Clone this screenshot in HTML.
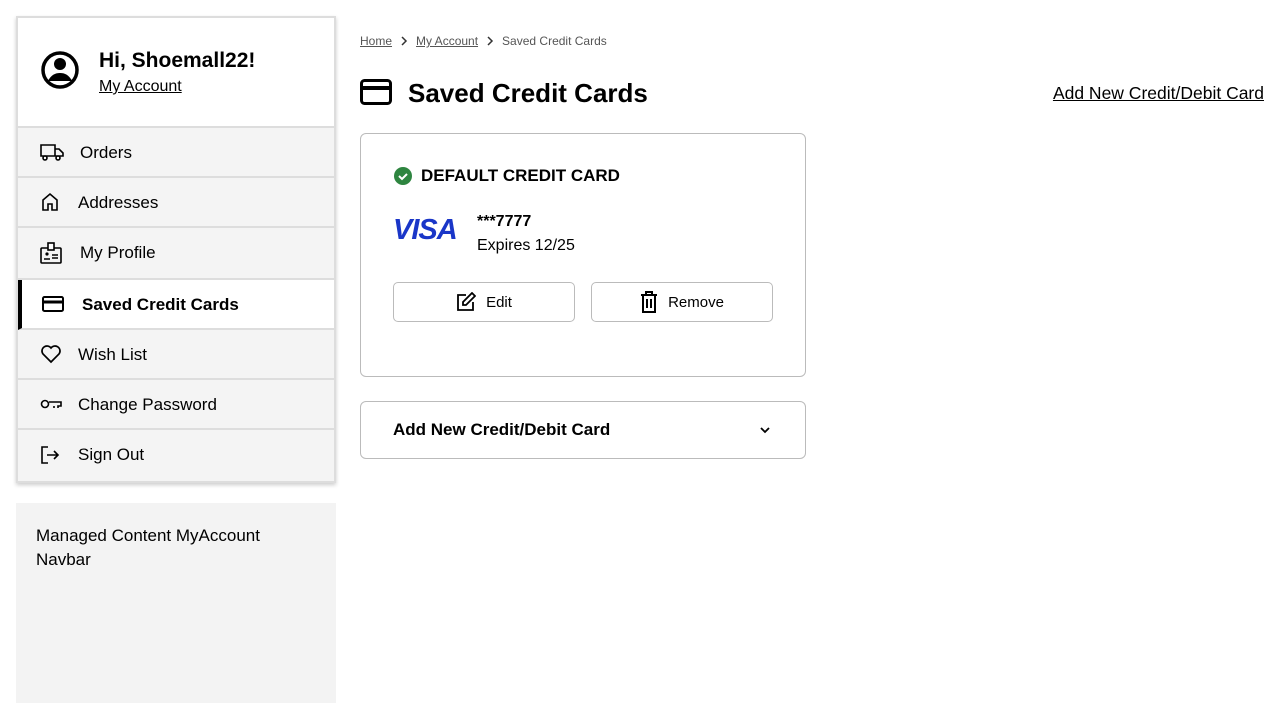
<!DOCTYPE html>
<html><head><meta charset="utf-8"><style>
*{box-sizing:border-box;margin:0;padding:0}
body{width:1280px;height:720px;background:#fff;font-family:"Liberation Sans",sans-serif;color:#000;position:relative;overflow:hidden}
.side{position:absolute;left:16px;top:16px;width:320px;height:467px;border:2px solid #ddd;box-shadow:0 2px 4px rgba(0,0,0,.2);background:#f4f4f4}
.hdr{height:110px;background:#fff;border-bottom:2px solid #ddd;position:relative}
.hdr .nm{position:absolute;left:81px;top:31px;font-size:21px;font-weight:bold}
.hdr .ma{position:absolute;left:81px;top:60px;font-size:16px;text-decoration:underline}
.hdr svg{position:absolute;left:22px;top:32px}
.it{height:50px;border-bottom:2px solid #ddd;position:relative;font-size:17px;display:flex;align-items:center}
.it svg{position:absolute;left:22px}
.it span{position:absolute;left:60px;top:15px}
.it.act{background:#fff;border-left:4px solid #000}
.it.act span{font-weight:bold;left:60px}
.mc{position:absolute;left:16px;top:503px;width:320px;height:200px;background:#f3f3f3;padding:21px 20px;font-size:17px;line-height:24px}
.bc{position:absolute;left:360px;top:34px;font-size:12px;color:#555;display:flex;align-items:center;gap:8px}
.bc u{color:#555}
h1{position:absolute;left:408px;top:78px;font-size:26px;font-weight:bold}
.addl{position:absolute;right:16px;top:83px;font-size:17.5px;text-decoration:underline}
.card{position:absolute;left:360px;top:133px;width:446px;height:244px;border:1px solid #bbb;border-radius:6px}
.btn{position:absolute;top:148px;width:182px;height:40px;border:1px solid #bbb;border-radius:5px;font-size:15px;display:flex;align-items:center;justify-content:center;gap:10px}
.acc{position:absolute;left:360px;top:401px;width:446px;height:58px;border:1px solid #bbb;border-radius:6px;font-size:17px;font-weight:bold;padding:18px 32px}
</style></head><body>
<div class="side">
 <div class="hdr">
  <svg width="40" height="40" viewBox="0 0 40 40"><circle cx="20" cy="20" r="17" fill="none" stroke="#000" stroke-width="3.5"/><circle cx="20" cy="14" r="6" fill="#000"/><path d="M8 31c3-6 7-8 12-8s9 2 12 8z" fill="#000"/></svg>
  <div class="nm">Hi, Shoemall22!</div><div class="ma">My Account</div>
 </div>
 <div class="it"><svg width="24" height="20" viewBox="0 0 24 20"><path d="M1 3h14v11H1zM15 7h4l4 4v3h-8z" fill="none" stroke="#000" stroke-width="1.6"/><circle cx="5" cy="16" r="2" fill="#fff" stroke="#000" stroke-width="1.6"/><circle cx="18" cy="16" r="2" fill="#fff" stroke="#000" stroke-width="1.6"/></svg><span style="left:62px">Orders</span></div>
 <div class="it"><svg width="20" height="20" viewBox="0 0 20 20"><path d="M3 18V8l7-6 7 6v10h-5v-6H8v6z" fill="none" stroke="#000" stroke-width="1.6"/></svg><span>Addresses</span></div>
 <div class="it" style="height:52px"><svg width="22" height="22" viewBox="0 0 22 22"><rect x="1" y="6" width="20" height="15" rx="1" fill="none" stroke="#000" stroke-width="1.6"/><rect x="8" y="1" width="6" height="7" fill="#fff" stroke="#000" stroke-width="1.6"/><circle cx="7" cy="12" r="1.6"/><path d="M4 17h6M12 13h6M12 16h6" stroke="#000" stroke-width="1.4"/></svg><span style="left:62px">My Profile</span></div>
 <div class="it act"><svg width="22" height="18" viewBox="0 0 22 18" style="left:20px"><rect x="1" y="2" width="20" height="14" rx="1.5" fill="none" stroke="#000" stroke-width="2"/><path d="M1 7h20" stroke="#000" stroke-width="3"/></svg><span>Saved Credit Cards</span></div>
 <div class="it"><svg width="22" height="20" viewBox="0 0 22 20"><path d="M11 18L3 10a5 5 0 0 1 8-6 5 5 0 0 1 8 6z" fill="none" stroke="#000" stroke-width="1.7"/></svg><span>Wish List</span></div>
 <div class="it"><svg width="22" height="14" viewBox="0 0 22 14"><circle cx="5" cy="7" r="3.5" fill="none" stroke="#000" stroke-width="1.6"/><path d="M9 5h12v4h-3v2M14 9v2" fill="none" stroke="#000" stroke-width="1.6"/></svg><span>Change Password</span></div>
 <div class="it" style="border-bottom:none"><svg width="20" height="20" viewBox="0 0 20 20"><path d="M8 2H2v16h6M7 10h11M14 6l4 4-4 4" fill="none" stroke="#000" stroke-width="1.6"/></svg><span>Sign Out</span></div>
</div>
<div class="mc">Managed Content MyAccount Navbar</div>
<div class="bc"><u>Home</u><svg width="8" height="10" viewBox="0 0 8 10"><path d="M2 1l4 4-4 4" fill="none" stroke="#333" stroke-width="1.5"/></svg><u>My Account</u><svg width="8" height="10" viewBox="0 0 8 10"><path d="M2 1l4 4-4 4" fill="none" stroke="#333" stroke-width="1.5"/></svg><span>Saved Credit Cards</span></div>
<svg style="position:absolute;left:360px;top:79px" width="32" height="26" viewBox="0 0 32 26"><rect x="1.5" y="1.5" width="29" height="23" rx="3" fill="none" stroke="#000" stroke-width="3"/><path d="M1 9h30" stroke="#000" stroke-width="4"/></svg>
<h1>Saved Credit Cards</h1>
<div class="addl">Add New Credit/Debit Card</div>
<div class="card">
 <svg style="position:absolute;left:33px;top:33px" width="18" height="18" viewBox="0 0 18 18"><circle cx="9" cy="9" r="9" fill="#2e8540"/><path d="M5 9l3 3 5-5" fill="none" stroke="#fff" stroke-width="2"/></svg>
 <div style="position:absolute;left:60px;top:32px;font-size:17px;font-weight:bold">DEFAULT CREDIT CARD</div>
 <div style="position:absolute;left:32px;top:80px;font-size:29px;font-weight:bold;font-style:italic;color:#1a36c8;letter-spacing:-1px">VISA</div>
 <div style="position:absolute;left:116px;top:79px;font-size:16px;font-weight:bold">***7777</div>
 <div style="position:absolute;left:116px;top:103px;font-size:16px">Expires 12/25</div>
 <div class="btn" style="left:32px"><svg width="20" height="20" viewBox="0 0 20 20"><path d="M10 3H2v15h15v-8" fill="none" stroke="#000" stroke-width="1.8"/><path d="M16 1l3 3-9 9H7v-3z" fill="none" stroke="#000" stroke-width="1.8"/></svg>Edit</div>
 <div class="btn" style="left:230px"><svg width="18" height="22" viewBox="0 0 18 22"><path d="M1 4h16M6 4V1h6v3M3 4v17h12V4M7 8v9M11 8v9" fill="none" stroke="#000" stroke-width="2"/></svg>Remove</div>
</div>
<div class="acc">Add New Credit/Debit Card<svg style="position:absolute;right:34px;top:24px" width="12" height="8" viewBox="0 0 12 8"><path d="M2 2l4 4 4-4" fill="none" stroke="#000" stroke-width="1.8"/></svg></div>
</body></html>
